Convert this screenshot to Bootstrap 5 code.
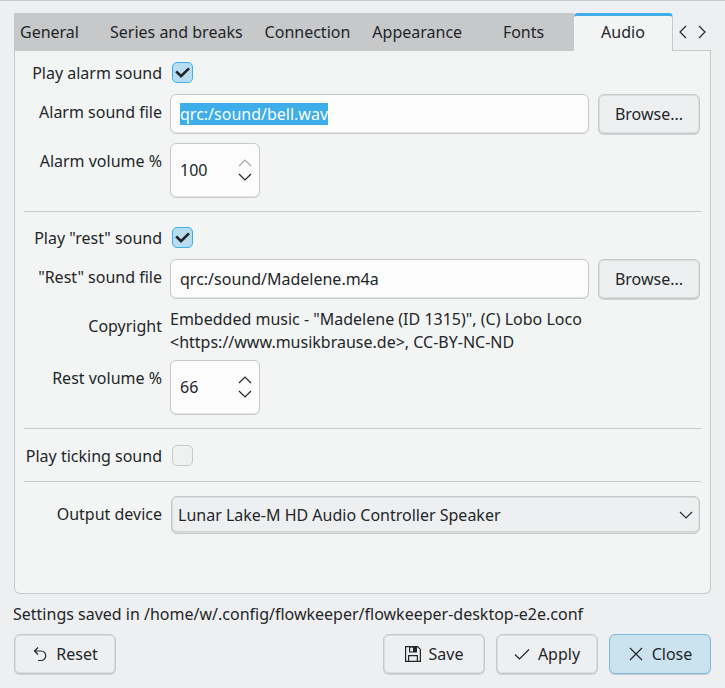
<!DOCTYPE html>
<html lang="en">
<head>
<meta charset="utf-8">
<meta name="viewport" content="width=device-width, initial-scale=1">
<title>Settings</title>
<link href="https://cdn.jsdelivr.net/npm/bootstrap@5.3.0/dist/css/bootstrap.min.css" rel="stylesheet">
<style>
  :root { --line: #c6c8c9; --ink: #232629; --accent: #3daee9; --window: #eeeff1; --panel: #f3f5f5; }
  body { font-family: "Noto Sans", sans-serif; font-size: 16px; line-height: 22px; color: var(--ink); background: var(--window); }
  .dialog { border-top: 1px solid var(--line); padding: 12px 14px 14px; }
  .tabstrip { height: 38px; }
  .tab { border: 0; background: #c6c8c9; color: var(--ink); padding: 0 11px; min-width: 99px; white-space: nowrap; }
  .tab-clipped { min-width: 85px; padding-left: 6px; text-align: left; }
  .tab.active { background: var(--panel); border-top: 3px solid var(--accent); border-right: 1px solid var(--line); border-radius: 4px 4px 0 0; padding-bottom: 3px; }
  .scrollers { border-bottom: 1px solid var(--line); }
  .scrollers button { border: 0; background: none; padding: 0; width: 19px; display: grid; place-items: center; color: var(--ink); }
  .panel { background: var(--panel); border: 1px solid var(--line); border-top: 0; border-radius: 0 0 6px 6px; padding: 9px; }
  .line { display: grid; grid-template-columns: 138px minmax(0, 1fr); column-gap: 8px; margin-bottom: 9px; }
  .line-tight { margin-bottom: 6px; }
  .line > :first-child { text-align: right; padding-top: 7px; white-space: nowrap; }
  .line-check { align-items: center; min-height: 25px; }
  .line-check > :first-child { padding-top: 0; }
  .rule { height: 1px; background: var(--line); margin: 13px 0 14px; }
  .rule-close { margin-bottom: 13px; }
  .filepick { gap: 9px; padding-right: 1px; }
  .form-control, .form-select, .push { font-size: 16px; line-height: 22px; color: var(--ink); border: 1px solid var(--line); border-radius: 6px; }
  .form-control { height: 40px; padding: 0 9px; background: #fcfcfc; box-shadow: inset 0 -1px 0 #e3e4e5; }
  .form-control:focus { border-color: var(--line); box-shadow: inset 0 -1px 0 #e3e4e5; background: #fcfcfc; color: var(--ink); }
  .form-control::selection { background: var(--accent); color: #fcfcfc; }
  .push { height: 40px; width: 102px; background: var(--window); padding: 0; box-shadow: inset 0 0 0 1px #dcddde, 0 1px 0 #cfd1d2; }
  .push svg { flex: none; }
  .push-default { background: #cbe3ef; border-color: #7fbcdc; box-shadow: 0 1px 0 #c3cdd3; }
  .form-check-input.tick { width: 21px; height: 21px; margin: 0 0 0 2px; border: 1px solid var(--line); border-radius: 5px; background-color: #eff1f1; }
  .form-check-input.tick:checked { background-color: #b9ddf0; border-color: var(--accent); background-size: 19px 19px;
    background-image: url("data:image/svg+xml,%3Csvg xmlns='http://www.w3.org/2000/svg' viewBox='0 0 19 19'%3E%3Cpath d='M3.2 8.4l4.8 4.8L16 5.400' fill='none' stroke='%23232629' stroke-width='2.700'/%3E%3C/svg%3E"); }
  .spin { width: 90px; height: 55px; background: #fcfcfc; border: 1px solid var(--line); border-radius: 6px; box-shadow: inset 0 -1px 0 #e3e4e5; padding-bottom: 1px; }
  .spin input { border: 0; background: none; padding: 0 0 0 9px; min-width: 0; width: 66px; color: var(--ink); outline: 0; appearance: textfield; -moz-appearance: textfield; }
  .spin input::-webkit-inner-spin-button { -webkit-appearance: none; margin: 0; }
  .spin button { border: 0; background: none; padding: 0; width: 16px; height: 14px; display: grid; place-items: center; color: var(--ink); }
  .spin button:disabled { color: #a5a7a8; }
  .form-select { height: 38px; margin: 0 1px; padding: 0 36px 0 6px; width: auto; background-color: var(--window); box-shadow: inset 0 0 0 1px #dcddde, inset 0 -2px 0 #cfd1d2;
    background-size: 16px 16px; background-position: right 5px center;
    background-image: url("data:image/svg+xml,%3Csvg xmlns='http://www.w3.org/2000/svg' viewBox='0 0 16 16'%3E%3Cpath d='M2 5l6 6 6-6' fill='none' stroke='%23232629' stroke-width='1.1'/%3E%3C/svg%3E"); }
  .credit { line-height: 23px; }
  .status { margin: 9px 0 9px -1px; }
  .answers { gap: 11px; }
  .ico { fill: none; stroke: currentColor; stroke-width: 1.2; }
</style>
<script src="https://cdn.jsdelivr.net/npm/bootstrap@5.3.0/dist/js/bootstrap.bundle.min.js"></script>
</head>
<body>
<main class="dialog d-flex flex-column min-vh-100">
  <div class="tabstrip d-flex" role="tablist">
    <button class="tab tab-clipped" role="tab" type="button">General</button>
    <button class="tab" role="tab" type="button">Series and breaks</button>
    <button class="tab" role="tab" type="button">Connection</button>
    <button class="tab" role="tab" type="button">Appearance</button>
    <button class="tab flex-grow-1" role="tab" type="button">Fonts</button>
    <button class="tab active" role="tab" type="button" aria-selected="true">Audio</button>
    <div class="scrollers d-flex">
      <button type="button" aria-label="Previous tabs"><svg class="ico" width="16" height="16"><path d="M11 2L5 8l6 6"/></svg></button>
      <button type="button" aria-label="Next tabs"><svg class="ico" width="16" height="16"><path d="M5 2l6 6-6 6"/></svg></button>
    </div>
  </div>

  <form class="panel flex-grow-1">
    <div class="line line-check">
      <label for="alarmOn">Play alarm sound</label>
      <input class="form-check-input tick" type="checkbox" id="alarmOn" checked>
    </div>
    <div class="line">
      <label for="alarmFile">Alarm sound file</label>
      <div class="filepick d-flex">
        <input class="form-control" type="text" id="alarmFile" value="qrc:/sound/bell.wav" spellcheck="false">
        <button class="btn push flex-shrink-0" type="button">Browse...</button>
      </div>
    </div>
    <div class="line">
      <label for="alarmVol">Alarm volume %</label>
      <div class="spin d-flex align-items-center">
        <input type="number" id="alarmVol" value="100" min="0" max="100">
        <div>
          <button type="button" aria-label="Increase alarm volume" disabled><svg class="ico" width="16" height="14"><path d="M2 10l6-6 6 6"/></svg></button>
          <button type="button" aria-label="Decrease alarm volume"><svg class="ico" width="16" height="14"><path d="M2 4l6 6 6-6"/></svg></button>
        </div>
      </div>
    </div>
    <div class="rule rule-close"></div>
    <div class="line line-check">
      <label for="restOn">Play "rest" sound</label>
      <input class="form-check-input tick" type="checkbox" id="restOn" checked>
    </div>
    <div class="line">
      <label for="restFile">"Rest" sound file</label>
      <div class="filepick d-flex">
        <input class="form-control" type="text" id="restFile" value="qrc:/sound/Madelene.m4a" spellcheck="false">
        <button class="btn push flex-shrink-0" type="button">Browse...</button>
      </div>
    </div>
    <div class="line line-tight">
      <span>Copyright</span>
      <div class="credit">Embedded music - "Madelene (ID 1315)", (C) Lobo Loco<br>&lt;https://www.musikbrause.de&gt;, CC-BY-NC-ND</div>
    </div>
    <div class="line">
      <label for="restVol">Rest volume %</label>
      <div class="spin d-flex align-items-center">
        <input type="number" id="restVol" value="66" min="0" max="100">
        <div>
          <button type="button" aria-label="Increase rest volume"><svg class="ico" width="16" height="14"><path d="M2 10l6-6 6 6"/></svg></button>
          <button type="button" aria-label="Decrease rest volume"><svg class="ico" width="16" height="14"><path d="M2 4l6 6 6-6"/></svg></button>
        </div>
      </div>
    </div>
    <div class="rule"></div>
    <div class="line line-check">
      <label for="tickOn">Play ticking sound</label>
      <input class="form-check-input tick" type="checkbox" id="tickOn">
    </div>
    <div class="rule"></div>
    <div class="line">
      <label for="device">Output device</label>
      <select class="form-select" id="device"><option>Lunar Lake-M HD Audio Controller Speaker</option></select>
    </div>
  </form>

  <p class="status">Settings saved in /home/w/.config/flowkeeper/flowkeeper-desktop-e2e.conf</p>
  <div class="d-flex">
    <button class="btn push me-auto d-flex align-items-center justify-content-center gap-2" type="button">
      <svg class="ico" width="16" height="16"><path d="M6 1.500L2.500 5 6 8.500M2.500 5H9a4.500 4.500 0 0 1 0 9.500H6"/></svg>Reset</button>
    <div class="answers d-flex">
      <button class="btn push d-flex align-items-center justify-content-center gap-2" type="button">
        <svg class="ico" width="16" height="16"><path d="M.6.6h12l2.800 2.800v12H.6zM3.600 15V9.600h8.800V15"/><path d="M4.600 1v5h6.800V1z"/><path d="M8 1h3.400v5H8z" fill="currentColor" stroke="none"/></svg>Save</button>
      <button class="btn push d-flex align-items-center justify-content-center gap-2" type="button">
        <svg class="ico" width="16" height="16"><path d="M1 8.500L5.500 13 15 3.500"/></svg>Apply</button>
      <button class="btn push push-default d-flex align-items-center justify-content-center gap-2" type="button">
        <svg class="ico" width="16" height="16"><path d="M2 2l12 12M14 2L2 14"/></svg>Close</button>
    </div>
  </div>
</main>
<script>
  const file = document.getElementById('alarmFile');
  file.focus();
  file.select();
</script>
</body>
</html>
